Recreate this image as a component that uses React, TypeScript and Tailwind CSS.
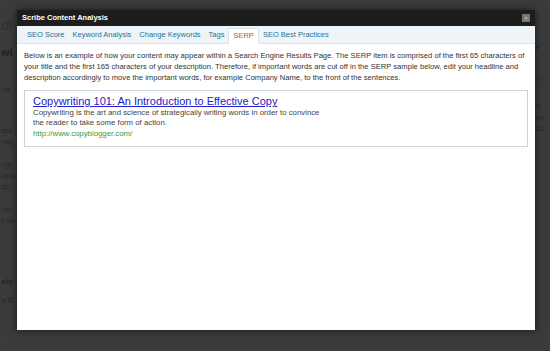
export default function App() {
  const tabs = ["SEO Score", "Keyword Analysis", "Change Keywords", "Tags", "SERP", "SEO Best Practices"];

  return (
    <div className="relative h-[351px] w-[550px] overflow-hidden bg-[#3b3b3b] font-['Liberation_Sans',sans-serif]">
      {/* dimmed admin page behind */}
      <div className="flex h-full justify-between text-[7px] text-[#262626]">
        <div className="flex w-[17px] flex-col whitespace-nowrap pl-[1px] pt-[14px] leading-[11px]">
          <span className="text-[14px] italic leading-[22px] text-[#2f2f2f]">di</span>
          <span className="mt-[8px] text-[11px] font-bold leading-[16px] text-[#222]">wi</span>
          <span className="mt-[24px]">Ins</span>
          <span className="mt-[30px]">ass</span>
          <span>nag</span>
          <span className="mt-[12px]">opy</span>
          <span>cally</span>
          <span>ttp:</span>
          <span className="mt-[12px]">her</span>
          <span>n an</span>
          <span className="mt-[50px] font-bold">ails</span>
          <span className="mt-[8px] font-bold">n Ti</span>
        </div>
        <div className="flex w-[15px] flex-col whitespace-nowrap pt-[42px] leading-[11px]">
          <span>e</span>
          <span className="mt-[20px] text-[11px] leading-[16px] text-[#2c3a2c]">10</span>
          <span className="mt-[12px]">Ti</span>
          <span>Me</span>
          <span>Co</span>
        </div>
      </div>

      {/* modal */}
      <div className="absolute left-[17px] top-[10px] flex h-[320px] w-[518px] flex-col bg-white shadow-[0_0_8px_rgba(0,0,0,0.6)]">
        <div className="flex h-[16px] items-center justify-between bg-[#1d1d1d] px-[5px]">
          <span className="text-[7.5px] font-bold text-white">Scribe Content Analysis</span>
          <span className="flex h-[8px] w-[8px] items-center justify-center bg-[#777] text-[6px] leading-none text-[#ccc]">×</span>
        </div>
        <div className="flex h-[18px] items-end border-b border-[#d8e3ea] bg-[#eef4f7] px-[6px]">
          {tabs.map((t) => (
            <span
              key={t}
              className={
                t === "SERP"
                  ? "-mb-px flex h-[16px] items-center border border-b-white border-[#d8e3ea] bg-white px-[4px] text-[7.5px] text-[#d54e21]"
                  : "flex h-[16px] items-center px-[4px] text-[7.5px] text-[#21759b]"
              }
            >
              {t}
            </span>
          ))}
        </div>
        <div className="px-[7px] pt-[6px]">
          <p className="text-[7.6px] leading-[11px] text-[#333]">
            Below is an example of how your content may appear within a Search Engine Results Page. The SERP item is comprised of the first 65 characters of
            <br />
            your title and the first 165 characters of your description. Therefore, if important words are cut off in the SERP sample below, edit your headline and
            <br />
            description accordingly to move the important words, for example Company Name, to the front of the sentences.
          </p>
          <div className="mt-[7px] border border-[#c9d5de] px-[8px] pb-[7px] pt-[4px]">
            <div className="text-[11px] leading-[13px] text-[#2222cc] underline">Copywriting 101: An Introduction to Effective Copy</div>
            <div className="text-[7.8px] leading-[10px] text-[#444]">
              Copywriting is the art and science of strategically writing words in order to convince
              <br />
              the reader to take some form of action.
            </div>
            <div className="mt-px text-[7.8px] leading-[10px] text-[#3a9a3a]">http://www.copyblogger.com/</div>
          </div>
        </div>
      </div>
    </div>
  );
}
